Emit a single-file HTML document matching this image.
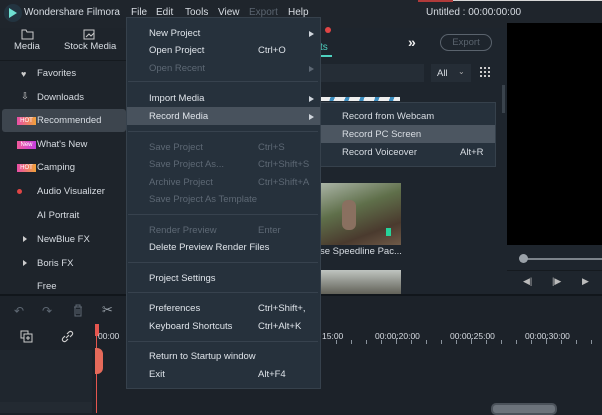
<!DOCTYPE html><html><head><style>
*{margin:0;padding:0;box-sizing:border-box}
body{width:602px;height:413px;overflow:hidden;background:#1b2128;font-family:"Liberation Sans",sans-serif;font-size:9.5px;color:#d8dde3;position:relative}
.a{position:absolute;white-space:nowrap}
.mi{position:absolute;left:149px;color:#dfe4ea}
.sc{position:absolute;left:258px;color:#dfe4ea}
.dis{color:#5d6874!important}
.sep{position:absolute;left:128px;width:190px;height:1px;background:#37424e}
.arr{position:absolute;left:309px;width:0;height:0;border-left:5px solid #cfd5dc;border-top:3px solid transparent;border-bottom:3px solid transparent}
.tick{position:absolute;top:340px;width:1px;height:4px;background:#8a939c}
</style></head><body>
<!-- title bar -->
<div class="a" style="left:0;top:0;width:602px;height:28px;background:#1f252c"></div>
<div class="a" style="left:117px;top:0;width:185px;height:18px;background:#1f252c"></div>
<div class="a" style="left:420px;top:0;width:182px;height:1px;background:#d7d7d7"></div>
<div class="a" style="left:418px;top:0;width:35px;height:2px;background:#b03a3a"></div>
<svg class="a" style="left:4px;top:4px" width="18" height="18"><circle cx="9" cy="9" r="9" fill="#233440"/><path d="M5 4 L13 9 L5 14 Z" fill="#6fe0d2"/></svg>
<div class="a" style="left:24px;top:7px;font-size:10px">Wondershare Filmora</div>
<div class="a" style="left:131px;top:7px;font-size:10px">File</div>
<div class="a" style="left:156px;top:7px;font-size:10px">Edit</div>
<div class="a" style="left:185px;top:7px;font-size:10px">Tools</div>
<div class="a" style="left:218px;top:7px;font-size:10px">View</div>
<div class="a" style="left:249px;top:7px;font-size:10px;color:#5b6570">Export</div>
<div class="a" style="left:288px;top:7px;font-size:10px">Help</div>
<div class="a" style="left:426px;top:7px;font-size:10px">Untitled : 00:00:00:00</div>
<!-- sidebar -->
<div class="a" style="left:0;top:28px;width:126px;height:268px;background:#1e242b"></div>
<div class="a" style="left:0;top:60px;width:126px;height:1px;background:#151a1f"></div>
<svg class="a" style="left:20px;top:28px" width="14" height="12"><path d="M2 2h4l1 2h6v7H2z" fill="none" stroke="#ccc" stroke-width="1"/></svg>
<div class="a" style="left:14px;top:41px">Media</div>
<svg class="a" style="left:82px;top:28px" width="14" height="12"><path d="M2 2h10v9H2zM4 9l3-3 2 2 3-3" fill="none" stroke="#ccc" stroke-width="1"/></svg>
<div class="a" style="left:64px;top:41px">Stock Media</div>
<div class="a" style="left:21px;top:69px;color:#ccc;font-size:9px">♥</div>
<div class="a" style="left:37px;top:68px">Favorites</div>
<div class="a" style="left:21px;top:91px;color:#ccc">⇩</div>
<div class="a" style="left:37px;top:92px">Downloads</div>
<div class="a" style="left:2px;top:109px;width:124px;height:23px;background:#3d454e;border-radius:3px"></div>
<div class="a" style="left:17px;top:117px;width:19px;height:8px;background:linear-gradient(90deg,#e94ea8,#f0a33a);font-size:6px;color:#fff;text-align:center;line-height:8px">HOT</div>
<div class="a" style="left:37px;top:115px">Recommended</div>
<div class="a" style="left:17px;top:141px;width:19px;height:8px;background:linear-gradient(90deg,#f05a9a,#c43fe0);font-size:6px;color:#fff;text-align:center;line-height:8px">New</div>
<div class="a" style="left:37px;top:139px">What's New</div>
<div class="a" style="left:17px;top:164px;width:19px;height:8px;background:linear-gradient(90deg,#e94ea8,#f0a33a);font-size:6px;color:#fff;text-align:center;line-height:8px">HOT</div>
<div class="a" style="left:37px;top:162px">Camping</div>
<div class="a" style="left:17px;top:189px;width:5px;height:5px;border-radius:50%;background:#e04545"></div>
<div class="a" style="left:37px;top:186px">Audio Visualizer</div>
<div class="a" style="left:37px;top:210px">AI Portrait</div>
<div class="a" style="left:23px;top:236px;border-left:4px solid #ccc;border-top:3px solid transparent;border-bottom:3px solid transparent"></div>
<div class="a" style="left:37px;top:234px">NewBlue FX</div>
<div class="a" style="left:23px;top:260px;border-left:4px solid #ccc;border-top:3px solid transparent;border-bottom:3px solid transparent"></div>
<div class="a" style="left:37px;top:258px">Boris FX</div>
<div class="a" style="left:37px;top:281px">Free</div>
<!-- content area -->
<div class="a" style="left:320px;top:28px;width:187px;height:268px;background:#1e252d"></div>
<div class="a" style="left:320px;top:42px;color:#4fd1c0;font-size:10px">ts</div>
<div class="a" style="left:320px;top:55px;width:12px;height:2px;background:#4fd1c0"></div>
<div class="a" style="left:325px;top:27px;width:6px;height:6px;border-radius:50%;background:#e04545"></div>
<div class="a" style="left:408px;top:34px;font-size:14px;color:#eee;font-weight:bold">»</div>
<div class="a" style="left:440px;top:34px;width:52px;height:17px;border:1px solid #5a636d;border-radius:9px;color:#5a636d;text-align:center;line-height:15px">Export</div>
<div class="a" style="left:320px;top:64px;width:104px;height:18px;background:#252d36"></div>
<div class="a" style="left:431px;top:64px;width:40px;height:18px;background:#252d36"></div>
<div class="a" style="left:437px;top:68px">All</div>
<div class="a" style="left:458px;top:67px;font-size:8px;color:#aaa">⌄</div>
<svg class="a" style="left:479px;top:66px" width="12" height="12"><g fill="#ccc"><rect x="1" y="1" width="2" height="2"/><rect x="5" y="1" width="2" height="2"/><rect x="9" y="1" width="2" height="2"/><rect x="1" y="5" width="2" height="2"/><rect x="5" y="5" width="2" height="2"/><rect x="9" y="5" width="2" height="2"/><rect x="1" y="9" width="2" height="2"/><rect x="5" y="9" width="2" height="2"/><rect x="9" y="9" width="2" height="2"/></g></svg>
<div class="a" style="left:502px;top:85px;width:3px;height:28px;background:#3a434c"></div>
<div class="a" style="left:320px;top:97px;width:80px;height:4px;background:repeating-linear-gradient(110deg,#eee 0 10px,#3d8ec0 10px 14px)"></div>
<div class="a" style="left:321px;top:183px;width:80px;height:62px;background:linear-gradient(160deg,#aab4a6 0%,#5f6f4a 40%,#4a3a2e 75%,#6f5a48 100%)"></div>
<div class="a" style="left:342px;top:200px;width:14px;height:30px;background:#8a7060;border-radius:6px"></div>
<div class="a" style="left:386px;top:228px;width:5px;height:8px;background:#26d39a"></div>
<div class="a" style="left:320px;top:246px">se Speedline Pac...</div>
<div class="a" style="left:321px;top:270px;width:80px;height:26px;background:linear-gradient(180deg,#bfc4c0,#5a5a50)"></div>
<!-- preview -->
<div class="a" style="left:507px;top:23px;width:95px;height:222px;background:#000"></div>
<div class="a" style="left:507px;top:245px;width:95px;height:50px;background:#1e252d"></div>
<div class="a" style="left:522px;top:258px;width:80px;height:2px;background:#7d848b"></div>
<div class="a" style="left:519px;top:254px;width:9px;height:9px;border-radius:50%;background:#9aa1a8"></div>
<div class="a" style="left:507px;top:270px;width:95px;height:1px;background:#151a1f"></div>
<div class="a" style="left:523px;top:276px;color:#bbb;font-size:9px">◀|</div>
<div class="a" style="left:552px;top:276px;color:#bbb;font-size:9px">|▶</div>
<div class="a" style="left:582px;top:276px;color:#bbb;font-size:9px">▶</div>
<!-- timeline -->
<div class="a" style="left:0;top:294px;width:602px;height:2px;background:#11161b"></div>
<div class="a" style="left:0;top:296px;width:602px;height:117px;background:#1c2229"></div>
<div class="a" style="left:0;top:350px;width:92px;height:52px;background:#1f262e"></div>
<div class="a" style="left:0;top:402px;width:92px;height:11px;background:#232a32"></div>
<div class="a" style="left:14px;top:304px;color:#5e6873;font-size:12px">↶</div>
<div class="a" style="left:42px;top:304px;color:#5e6873;font-size:12px">↷</div>
<svg class="a" style="left:72px;top:304px" width="12" height="13"><path d="M2 3h8M4 3V1h4v2M3 3v9h6V3M5 5v5M7 5v5" fill="none" stroke="#5e6873"/></svg>
<div class="a" style="left:102px;top:302px;color:#9aa2aa;font-size:13px">✂</div>
<svg class="a" style="left:20px;top:330px" width="13" height="13"><rect x="1" y="1" width="7" height="7" fill="none" stroke="#ccc"/><rect x="4" y="4" width="8" height="8" fill="#1c2229" stroke="#ccc"/><path d="M8 6v4M6 8h4" stroke="#ccc"/></svg>
<svg class="a" style="left:61px;top:330px" width="13" height="13"><path d="M5 8l3-3M4 6l-2 2a2 2 0 0 0 3 3l2-2M9 7l2-2a2 2 0 0 0-3-3L6 4" fill="none" stroke="#ccc" stroke-width="1.2"/></svg>
<div class="a" style="left:96px;top:325px;width:1px;height:88px;background:#e4564f"></div>
<div class="a" style="left:95px;top:324px;width:4px;height:12px;background:#e4564f"></div>
<div class="a" style="left:95px;top:348px;width:8px;height:26px;background:#e56a5a;border-radius:0 6px 6px 0"></div>
<div class="a" style="left:98px;top:331px;font-size:8.5px">00:00</div>
<div class="a" style="left:322px;top:331px;font-size:8.5px">15:00</div>
<div class="a" style="left:375px;top:331px;font-size:8.5px">00:00:20:00</div>
<div class="a" style="left:450px;top:331px;font-size:8.5px">00:00:25:00</div>
<div class="a" style="left:525px;top:331px;font-size:8.5px">00:00:30:00</div>
<div class="tick" style="left:336px"></div><div class="tick" style="left:351px"></div><div class="tick" style="left:366px"></div><div class="tick" style="left:381px"></div><div class="tick" style="left:396px;height:6px;top:338px"></div><div class="tick" style="left:411px"></div><div class="tick" style="left:426px"></div><div class="tick" style="left:441px"></div><div class="tick" style="left:456px"></div><div class="tick" style="left:471px;height:6px;top:338px"></div><div class="tick" style="left:486px"></div><div class="tick" style="left:501px"></div><div class="tick" style="left:516px"></div><div class="tick" style="left:531px"></div><div class="tick" style="left:546px;height:6px;top:338px"></div><div class="tick" style="left:561px"></div><div class="tick" style="left:576px"></div><div class="tick" style="left:591px"></div>
<div class="a" style="left:491px;top:403px;width:66px;height:12px;background:#6c737b;border-radius:5px;border:2px solid #4b525a"></div>
<!-- File menu -->
<div class="a" style="left:126px;top:17px;width:195px;height:372px;background:#26313c;border:1px solid #36414c"></div>
<div class="a" style="left:127px;top:107px;width:193px;height:18px;background:#48525d"></div>
<div class="mi" style="top:28px">New Project</div><div class="arr" style="top:31px"></div>
<div class="mi" style="top:45px">Open Project</div><div class="sc" style="top:45px">Ctrl+O</div>
<div class="mi dis" style="top:63px">Open Recent</div><div class="arr" style="top:66px;border-left-color:#5d6874"></div>
<div class="sep" style="top:81px"></div>
<div class="mi" style="top:93px">Import Media</div><div class="arr" style="top:96px"></div>
<div class="mi" style="top:111px">Record Media</div><div class="arr" style="top:114px"></div>
<div class="sep" style="top:131px"></div>
<div class="mi dis" style="top:142px">Save Project</div><div class="sc dis" style="top:142px">Ctrl+S</div>
<div class="mi dis" style="top:159px">Save Project As...</div><div class="sc dis" style="top:159px">Ctrl+Shift+S</div>
<div class="mi dis" style="top:177px">Archive Project</div><div class="sc dis" style="top:177px">Ctrl+Shift+A</div>
<div class="mi dis" style="top:194px">Save Project As Template</div>
<div class="sep" style="top:214px"></div>
<div class="mi dis" style="top:225px">Render Preview</div><div class="sc dis" style="top:225px">Enter</div>
<div class="mi" style="top:242px">Delete Preview Render Files</div>
<div class="sep" style="top:262px"></div>
<div class="mi" style="top:273px">Project Settings</div>
<div class="sep" style="top:292px"></div>
<div class="mi" style="top:303px">Preferences</div><div class="sc" style="top:303px">Ctrl+Shift+,</div>
<div class="mi" style="top:321px">Keyboard Shortcuts</div><div class="sc" style="top:321px">Ctrl+Alt+K</div>
<div class="sep" style="top:341px"></div>
<div class="mi" style="top:351px">Return to Startup window</div>
<div class="mi" style="top:369px">Exit</div><div class="sc" style="top:369px">Alt+F4</div>
<!-- submenu -->
<div class="a" style="left:320px;top:102px;width:176px;height:65px;background:#26313c;border:1px solid #36414c"></div>
<div class="a" style="left:321px;top:125px;width:174px;height:18px;background:#4c5661"></div>
<div class="a" style="left:342px;top:111px">Record from Webcam</div>
<div class="a" style="left:342px;top:129px">Record PC Screen</div>
<div class="a" style="left:342px;top:147px">Record Voiceover</div>
<div class="a" style="left:460px;top:147px">Alt+R</div>
</body></html>
